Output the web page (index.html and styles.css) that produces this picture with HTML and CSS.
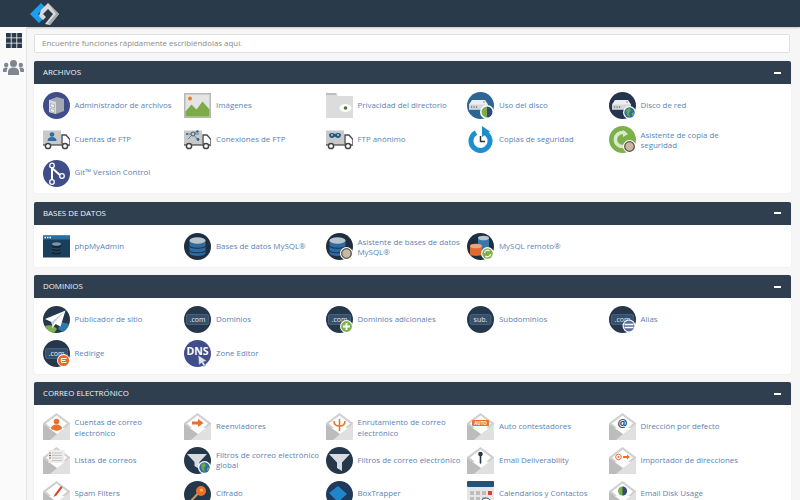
FILE: index.html
```html
<!DOCTYPE html>
<html lang="es">
<head>
  <meta charset="UTF-8">
  <meta name="viewport" content="width=device-width, initial-scale=1.0">
  <title>cPanel - Herramientas</title>
  <link rel="stylesheet" href="styles.css">
</head>
<body>
  <!-- shared icon symbols -->
  <svg class="sprites" xmlns="http://www.w3.org/2000/svg">
    <symbol id="truck" viewBox="0 0 27 27">
      <rect x="0" y="4.500" width="18" height="14" fill="#c9c9c9"/>
      <path d="M19 9h4l4 4.500v5.500h-8z" fill="#fff" stroke="#4a4a4a" stroke-width="1.400"/>
      <rect x="0" y="18" width="27" height="1.800" fill="#777"/>
      <circle cx="5" cy="20" r="2.600" fill="#fff" stroke="#444" stroke-width="1.500"/>
      <circle cx="22" cy="20" r="2.600" fill="#fff" stroke="#444" stroke-width="1.500"/>
    </symbol>
    <symbol id="env" viewBox="0 0 27 27">
      <path d="M13.500 0 27 10v5H0v-5z" fill="#d0d0d0"/>
      <path d="M13.500 2.500 24 10.500 13.500 20 3 10.500z" fill="#fff"/>
      <path d="M0 11 14 21 27 27H0z" fill="#bcbcbc"/>
      <path d="M27 11v16H7l7-6z" fill="#e0e0e0"/>
    </symbol>
    <symbol id="server" viewBox="0 0 27 27">
      <path d="M4 12.500 7 8h13l3 4.500v5H4z" fill="#eceff2"/>
      <rect x="4" y="12.500" width="19" height="5" fill="#d3d7db"/>
      <path d="M6 15h1.200M8.500 15h1.200M11 15h1.200" stroke="#444" stroke-width="1.200"/>
      <circle cx="19" cy="10" r=".8" fill="#d9663c"/>
    </symbol>
    <symbol id="db" viewBox="0 0 27 27">
      <path d="M5.500 8v12c0 4 16 4 16 0V8z" fill="#2d6ba3"/>
      <path d="M5.500 13c0 3 16 3 16 0M5.500 17.500c0 3 16 3 16 0" fill="none" stroke="#1d2f44" stroke-width="1"/>
      <ellipse cx="13.500" cy="7.500" rx="8" ry="3.300" fill="#b9c3cc"/>
    </symbol>
    <symbol id="com" viewBox="0 0 27 27">
      <circle cx="13.500" cy="13.500" r="13.500" fill="#25374b"/>
      <rect x="2.500" y="8.500" width="22" height="10" rx="1.500" fill="#35506c" stroke="#5c7690" stroke-width=".6"/>
      <text x="13.500" y="16" text-anchor="middle" class="svg-text">.com</text>
    </symbol>
    <symbol id="globe" viewBox="0 0 27 27">
      <circle cx="20.500" cy="20.500" r="6.500" fill="#fff"/>
      <circle cx="20.500" cy="20.500" r="5.200" fill="#2f6f9e"/>
      <path d="M17 18l3-2 2 2-2 3 1 4-3-2zM23 21l2-1v3l-2 1z" fill="#6ea84a"/>
    </symbol>
    <symbol id="magnifier" viewBox="0 0 27 27">
      <circle cx="20.500" cy="20.500" r="6.500" fill="#fff"/>
      <circle cx="20.500" cy="20.500" r="4.800" fill="#c8b9a0" stroke="#5a5348" stroke-width="1.300"/>
    </symbol>
  </svg>

  <header class="topbar">
    <svg class="logo" width="31" height="24" viewBox="0 0 31 24">
      <path d="M12 1 1 12l9 9 4-4-5-5 7-7z" fill="#1b9df0"/>
      <path d="M12 8 19 1l11 11-9 11-5-1 8-10-5-5-5 5 3 3-3 3-4-4z" fill="#d9d9d9"/>
      <path d="M19 1l11 11-9 11-2-2 8-9z" fill="#a9a9a9"/>
    </svg>
  </header>

  <div class="layout">
    <nav class="sidebar">
      <svg class="side-icon" width="16" height="15" viewBox="0 0 16 15">
        <path d="M0 0h4.800v4.500H0zM5.600 0h4.800v4.500H5.600zM11.200 0H16v4.500h-4.800zM0 5.300h4.800v4.400H0zM5.600 5.300h4.800v4.400H5.600zM11.200 5.300H16v4.400h-4.800zM0 10.500h4.800V15H0zM5.600 10.500h4.800V15H5.600zM11.200 10.500H16V15h-4.800z" fill="#293a4a"/>
      </svg>
      <svg class="side-icon" width="21" height="15" viewBox="0 0 21 15">
        <circle cx="10.500" cy="3.500" r="3.500" fill="#7d8791"/>
        <circle cx="3.200" cy="5" r="2.200" fill="#7d8791"/>
        <circle cx="17.800" cy="5" r="2.200" fill="#7d8791"/>
        <path d="M5 15v-3c0-3 2-4.500 5.500-4.500S16 9 16 12v3zM0 12V10c0-1.500 1-2.500 3-2.500 .7 0 1.300.1 1.800.4C4 9 3.700 10 3.700 12zM21 12V10c0-1.500-1-2.500-3-2.500-.7 0-1.300.1-1.800.4.800 1.100 1.100 2.100 1.100 4.100z" fill="#7d8791"/>
      </svg>
    </nav>

    <main class="content">
      <div class="search">Encuentre funciones rápidamente escribiéndolas aquí.</div>

      <section class="panel">
        <div class="panel-head"><h2>ARCHIVOS</h2><span class="collapse"></span></div>
        <div class="panel-body">
          <a class="item"><svg class="icon" viewBox="0 0 27 27"><circle cx="13.500" cy="13.500" r="13.500" fill="#3f4d8a"/><path d="M6 8l8-3 7 2v12l-8 3-7-2z" fill="#a4a8b0"/><path d="M6 8l7 2v12l-7-2z" fill="#d8dade"/><path d="M7.500 11.500l4 1.200v3l-4-1.200zM7.500 16.500l4 1.200v3l-4-1.200z" fill="#eef0f2" stroke="#888" stroke-width=".5"/></svg><span class="label">Administrador de archivos</span></a>
          <a class="item"><svg class="icon" viewBox="0 0 27 27"><rect y="1" width="27" height="25" fill="#b8b8b8"/><rect x="1.500" y="2.500" width="24" height="22" fill="#e4e4e4"/><circle cx="6" cy="6.500" r="2" fill="#ef7b22"/><path d="M1.500 24.500v-5l6-7 5 5 6-8 7 8v7z" fill="#7dab45"/></svg><span class="label">Imágenes</span></a>
          <a class="item"><svg class="icon" viewBox="0 0 27 27"><path d="M0 1h10l2 3h15v22H0z" fill="#dcdcdc"/><path d="M0 1h10l1 2H0z" fill="#bdbdbd"/><ellipse cx="19.500" cy="16" rx="6" ry="4" fill="#fff"/><circle cx="19.500" cy="16" r="1.800" fill="#3f7a34"/></svg><span class="label">Privacidad del directorio</span></a>
          <a class="item"><svg class="icon" viewBox="0 0 27 27"><circle cx="13.500" cy="13.500" r="13.500" fill="#2d6593"/><use href="#server" x="-2" width="27" height="27"/><circle cx="20" cy="20" r="7" fill="#fff"/><path d="M20 20v-5.500a5.500 5.500 0 0 1 0 11z" fill="#33497e"/><path d="M20 20v5.500a5.500 5.500 0 0 1 0-11z" fill="#7aae4a"/></svg><span class="label">Uso del disco</span></a>
          <a class="item"><svg class="icon" viewBox="0 0 27 27"><circle cx="13.500" cy="13.500" r="13.500" fill="#24344f"/><use href="#server" x="-1" width="27" height="27"/><use href="#globe" width="27" height="27"/></svg><span class="label">Disco de red</span></a>
          <a class="item"><svg class="icon" viewBox="0 0 27 27"><use href="#truck" width="27" height="27"/><circle cx="9" cy="8.500" r="2.300" fill="#2a6fa6"/><path d="M4.500 15c0-3 2-4 4.500-4s4.500 1 4.500 4z" fill="#2a6fa6"/></svg><span class="label">Cuentas de FTP</span></a>
          <a class="item"><svg class="icon" viewBox="0 0 27 27"><use href="#truck" width="27" height="27"/><path d="M3 8h12M9 8l4-3M9 8l5 6M9 8l-5 5" stroke="#35607f" stroke-width=".7"/><circle cx="9" cy="8" r="2" fill="#c9c9c9" stroke="#35607f"/><circle cx="3" cy="8" r="1" fill="#35607f"/><circle cx="13.500" cy="5.500" r="1.200" fill="#35607f"/><circle cx="14" cy="13.500" r="1.400" fill="#35607f"/></svg><span class="label">Conexiones de FTP</span></a>
          <a class="item"><svg class="icon" viewBox="0 0 27 27"><use href="#truck" width="27" height="27"/><path d="M3 8c2-1.500 4-1.500 6 0 2-1.500 4-1.500 6 0 0 3-1.500 4-3 4-1.500 0-2-1-3-1.500C8 11 7.500 12 6 12c-1.500 0-3-1-3-4z" fill="#1d5b86"/><circle cx="6" cy="9" r="1" fill="#c9c9c9"/><circle cx="12" cy="9" r="1" fill="#c9c9c9"/></svg><span class="label">FTP anónimo</span></a>
          <a class="item"><svg class="icon" viewBox="0 0 27 27"><path d="M16 5.800A9.500 9.500 0 1 1 9 6.600" fill="none" stroke="#1d8fcf" stroke-width="5"/><path d="M15 0l8 5.500-8 5.500z" fill="#1d8fcf"/><path d="M13.500 10v5.500H18" fill="none" stroke="#333" stroke-width="1.500"/></svg><span class="label">Copias de seguridad</span></a>
          <a class="item"><svg class="icon" viewBox="0 0 27 27"><circle cx="13.500" cy="13.500" r="13.500" fill="#7cb04a"/><path d="M16 7a7 7 0 1 0 0 13" fill="none" stroke="#dbe8cd" stroke-width="3.500"/><path d="M14 4l5 4-5 3z" fill="#dbe8cd"/><use href="#magnifier" width="27" height="27"/></svg><span class="label two">Asistente de copia de seguridad</span></a>
          <a class="item"><svg class="icon" viewBox="0 0 27 27"><circle cx="13.500" cy="13.500" r="13.500" fill="#3f4d8a"/><path d="M9 7v14M9 8l9 8" fill="none" stroke="#fff" stroke-width="2"/><circle cx="9" cy="5.500" r="2.300" fill="#3f4d8a" stroke="#fff" stroke-width="1.300"/><circle cx="9" cy="22" r="2.300" fill="#3f4d8a" stroke="#fff" stroke-width="1.300"/><circle cx="19" cy="16" r="2.300" fill="#3f4d8a" stroke="#fff" stroke-width="1.300"/></svg><span class="label">Git™ Version Control</span></a>
        </div>
      </section>

      <section class="panel">
        <div class="panel-head"><h2>BASES DE DATOS</h2><span class="collapse"></span></div>
        <div class="panel-body">
          <a class="item"><svg class="icon" viewBox="0 0 27 27"><rect y="2.500" width="27" height="22" fill="#1a3f5c"/><rect y="2.500" width="27" height="4" fill="#2b6f9f"/><path d="M1.500 4.500h1.500M4 4.500h1.500M6.500 4.500H8" stroke="#fff" stroke-width="1.300"/><path d="M9 11v9c0 2 9 2 9 0v-9z" fill="#10273a"/><ellipse cx="13.500" cy="11" rx="4.500" ry="1.800" fill="#7d95a8"/><path d="M9 14.500c0 2 9 2 9 0M9 17.500c0 2 9 2 9 0" fill="none" stroke="#557186" stroke-width=".6"/></svg><span class="label">phpMyAdmin</span></a>
          <a class="item"><svg class="icon" viewBox="0 0 27 27"><circle cx="13.500" cy="13.500" r="13.500" fill="#1f2f42"/><use href="#db" width="27" height="27"/></svg><span class="label">Bases de datos MySQL®</span></a>
          <a class="item"><svg class="icon" viewBox="0 0 27 27"><circle cx="13.500" cy="13.500" r="13.500" fill="#1f2f42"/><use href="#db" x="-2" width="27" height="27"/><use href="#magnifier" width="27" height="27"/></svg><span class="label two">Asistente de bases de datos MySQL®</span></a>
          <a class="item"><svg class="icon" viewBox="0 0 27 27"><circle cx="13.500" cy="13.500" r="13.500" fill="#1f2f42"/><path d="M11 5v9c0 2.500 11 2.500 11 0V5z" fill="#3a77ad"/><ellipse cx="16.500" cy="5" rx="5.500" ry="2.300" fill="#b9c3cc"/><path d="M3 13v8c0 2.500 12 2.500 12 0v-8z" fill="#e0692f"/><ellipse cx="9" cy="13" rx="6" ry="2.300" fill="#f0a27c"/><circle cx="20.500" cy="20.500" r="6.500" fill="#fff"/><circle cx="20.500" cy="20.500" r="5.200" fill="#7cb04a"/><path d="M17.500 20a3 3 0 0 1 5-2M23.500 21a3 3 0 0 1-5 2" fill="none" stroke="#fff" stroke-width="1.200"/></svg><span class="label">MySQL remoto®</span></a>
        </div>
      </section>

      <section class="panel">
        <div class="panel-head"><h2>DOMINIOS</h2><span class="collapse"></span></div>
        <div class="panel-body">
          <a class="item"><svg class="icon" viewBox="0 0 27 27"><circle cx="13.500" cy="13.500" r="13.500" fill="#25374b"/><path d="M2 20c5-2 9 0 12 3l-3 4c-4-.5-7-3-9-7z" fill="#7cb04a"/><path d="M18 16l8 2c-1 4-3 6.500-6 8l-5-3z" fill="#2d7aa8"/><path d="M22.500 4.500 2 13l6.500 3 1 6 3-4 5 2.500z" fill="#fff"/><path d="M22.500 4.500 8.500 16l1 6 1.500-5z" fill="#c9d2da"/></svg><span class="label">Publicador de sitio</span></a>
          <a class="item"><svg class="icon" viewBox="0 0 27 27"><use href="#com" width="27" height="27"/></svg><span class="label">Dominios</span></a>
          <a class="item"><svg class="icon" viewBox="0 0 27 27"><use href="#com" width="27" height="27"/><circle cx="20.500" cy="20.500" r="6.500" fill="#fff"/><circle cx="20.500" cy="20.500" r="5.400" fill="#7cb04a"/><path d="M20.500 17v7M17 20.500h7" stroke="#fff" stroke-width="1.800"/></svg><span class="label">Dominios adicionales</span></a>
          <a class="item"><svg class="icon" viewBox="0 0 27 27"><circle cx="13.500" cy="13.500" r="13.500" fill="#25374b"/><rect x="3" y="8.500" width="21" height="10" rx="2" fill="#35506c" stroke="#5c7690" stroke-width=".6"/><text x="13.500" y="16" text-anchor="middle" class="svg-text">sub.</text></svg><span class="label">Subdominios</span></a>
          <a class="item"><svg class="icon" viewBox="0 0 27 27"><use href="#com" width="27" height="27"/><circle cx="20" cy="20" r="6.500" fill="#fff"/><circle cx="20" cy="20" r="5.400" fill="#5a6f9e"/><path d="M15.500 18.500h9M15.500 21.500h9" stroke="#fff" stroke-width="1.300"/></svg><span class="label">Alias</span></a>
          <a class="item"><svg class="icon" viewBox="0 0 27 27"><use href="#com" width="27" height="27"/><circle cx="20.500" cy="20.500" r="6.500" fill="#fff"/><circle cx="20.500" cy="20.500" r="5.600" fill="#e8672a"/><path d="M23.500 18.500h-5v4h5M18.500 20.500h4" fill="none" stroke="#fff" stroke-width="1.200"/></svg><span class="label">Redirige</span></a>
          <a class="item"><svg class="icon" viewBox="0 0 27 27"><circle cx="13.500" cy="13.500" r="13.500" fill="#3f4d8a"/><text x="13.500" y="14.500" text-anchor="middle" class="svg-dns">DNS</text><path d="M14 15l9 6-3.500 .8 2 3.500-2 1-2-3.500-2.500 2.500z" fill="#dfe3ea" stroke="#3f4d8a" stroke-width=".5"/></svg><span class="label">Zone Editor</span></a>
        </div>
      </section>

      <section class="panel">
        <div class="panel-head"><h2>CORREO ELECTRÓNICO</h2><span class="collapse"></span></div>
        <div class="panel-body">
          <a class="item"><svg class="icon" viewBox="0 0 27 27"><use href="#env" width="27" height="27"/><circle cx="13.500" cy="8.500" r="2.800" fill="#ec6f2d"/><path d="M8 16c0-3 2.500-4.500 5.500-4.500S19 13 19 16l-5.500 2z" fill="#ec6f2d"/></svg><span class="label two">Cuentas de correo electrónico</span></a>
          <a class="item"><svg class="icon" viewBox="0 0 27 27"><use href="#env" width="27" height="27"/><path d="M8 8.500h6V6l5.500 4-5.500 4v-2.500H8z" fill="#ec6f2d"/></svg><span class="label">Reenviadores</span></a>
          <a class="item"><svg class="icon" viewBox="0 0 27 27"><use href="#env" width="27" height="27"/><path d="M13.500 18V6M8 8c0 3 2 5 5.500 5S19 11 19 8" fill="none" stroke="#ec6f2d" stroke-width="1.500"/></svg><span class="label two">Enrutamiento de correo electrónico</span></a>
          <a class="item"><svg class="icon" viewBox="0 0 27 27"><use href="#env" width="27" height="27"/><rect x="5" y="7" width="17" height="6" rx="1" fill="#ec6f2d"/><text x="13.500" y="11.800" text-anchor="middle" class="svg-auto">AUTO</text></svg><span class="label">Auto contestadores</span></a>
          <a class="item"><svg class="icon" viewBox="0 0 27 27"><use href="#env" width="27" height="27"/><text x="13.500" y="13.500" text-anchor="middle" class="svg-at">@</text></svg><span class="label">Dirección por defecto</span></a>
          <a class="item"><svg class="icon" viewBox="0 0 27 27"><use href="#env" width="27" height="27"/><rect x="5.500" y="3" width="16" height="13" fill="#ededed"/><path d="M9 6h10M9 8.500h10M9 11h10M9 13.500h10" stroke="#c5c5c5"/><circle cx="7" cy="6" r=".8" fill="#c0532a"/><circle cx="7" cy="8.500" r=".8" fill="#444"/><circle cx="7" cy="11" r=".8" fill="#c0532a"/></svg><span class="label">Listas de correos</span></a>
          <a class="item"><svg class="icon" viewBox="0 0 27 27"><circle cx="13.500" cy="13.500" r="13.500" fill="#25374b"/><path d="M3 7h20l-7.500 8v7l-5-3v-4z" fill="#d8dce0"/><use href="#globe" width="27" height="27"/></svg><span class="label">Filtros de correo electrónico global</span></a>
          <a class="item"><svg class="icon" viewBox="0 0 27 27"><circle cx="13.500" cy="13.500" r="13.500" fill="#25374b"/><path d="M3 7h21l-8 8.500V24l-5-3v-5.500z" fill="#d8dce0"/></svg><span class="label">Filtros de correo electrónico</span></a>
          <a class="item"><svg class="icon" viewBox="0 0 27 27"><use href="#env" width="27" height="27"/><circle cx="13.500" cy="7" r="2.300" fill="#25374b"/><path d="M12.700 8h1.600v8l-.8 1-.8-1z" fill="#25374b"/></svg><span class="label">Email Deliverability</span></a>
          <a class="item"><svg class="icon" viewBox="0 0 27 27"><use href="#env" width="27" height="27"/><circle cx="9.500" cy="10" r="2.800" fill="none" stroke="#ec6f2d"/><circle cx="9.500" cy="10" r="1" fill="#ec6f2d"/><path d="M14 9h4V7.500l3 2.500-3 2.500V11h-4z" fill="#ec6f2d"/></svg><span class="label">Importador de direcciones</span></a>
          <a class="item"><svg class="icon" viewBox="0 0 27 27"><use href="#env" width="27" height="27"/><path d="M18 5l-6 8-1.500 3 3-1.500 6-8z" fill="#d9412b"/></svg><span class="label">Spam Filters</span></a>
          <a class="item"><svg class="icon" viewBox="0 0 27 27"><circle cx="13.500" cy="13.500" r="13.500" fill="#25374b"/><circle cx="17" cy="10" r="5" fill="#ec6f2d"/><circle cx="17.500" cy="9" r="1.600" fill="#f5c04a"/><path d="M13.500 13 5 22" stroke="#c8a15a" stroke-width="2"/></svg><span class="label">Cifrado</span></a>
          <a class="item"><svg class="icon" viewBox="0 0 27 27"><circle cx="13.500" cy="13.500" r="13.500" fill="#1f3a5c"/><path d="M3 12l9-7 9 8-9 8z" fill="#1f86c9"/><path d="M12 21l10 5" stroke="#d5dde5"/></svg><span class="label">BoxTrapper</span></a>
          <a class="item"><svg class="icon" viewBox="0 0 27 27"><rect y="0" width="27" height="27" fill="#e6e6e6"/><rect y="0" width="27" height="6" rx="1" fill="#24527a"/><path d="M3 10h4v4H3zM9 10h4v4H9zM15 10h4v4h-4zM3 16h4v4H3zM9 16h4v4H9zM15 16h4v4h-4z" fill="#bdbdbd"/><rect x="21" y="10" width="4" height="4" fill="#d9412b"/><circle cx="19" cy="22" r="5" fill="#fff" stroke="#24527a"/></svg><span class="label">Calendarios y Contactos</span></a>
          <a class="item"><svg class="icon" viewBox="0 0 27 27"><use href="#env" width="27" height="27"/><circle cx="13.500" cy="10" r="4.500" fill="#7aae4a"/><path d="M13.500 10V5.500a4.500 4.500 0 0 1 0 9z" fill="#33497e"/></svg><span class="label">Email Disk Usage</span></a>
        </div>
      </section>
    </main>
  </div>
</body>
</html>
```

FILE: styles.css
```css
html, body {
  margin: 0;
  height: 100%;
  overflow: hidden;
}
body {
  font-family: 'Open Sans', 'Noto Sans', sans-serif;
  font-size: 7.9px;
  background: #f6f6f6;
  color: #222;
  display: flex;
  flex-direction: column;
}
.sprites {
  display: none;
}
.topbar {
  flex: none;
  height: 27px;
  background: #293a4a;
  box-shadow: 0 1px 2px rgba(0, 0, 0, 0.2);
  display: flex;
  align-items: center;
  padding-left: 29px;
}
.layout {
  flex: 1;
  display: flex;
  min-height: 0;
}
.sidebar {
  flex: none;
  width: 23.5px;
  background: #fafafa;
  border-right: 1.5px solid #e4e4e4;
  display: flex;
  flex-direction: column;
  align-items: center;
  gap: 12px;
  padding: 6px 0 0 2px;
}
.content {
  flex: 1;
  min-width: 0;
  padding: 7px 9px 0 7.5px;
}
.search {
  height: 16.5px;
  line-height: 16.5px;
  margin-right: 0.7px;
  padding-left: 7px;
  background: #fff;
  border: 1px solid #dfe2e5;
  border-radius: 2px;
  color: #8a8a8a;
  margin-bottom: 8.8px;
}
.panel {
  background: #fff;
  border-radius: 2px;
  box-shadow: 0 0 1px rgba(0, 0, 0, 0.12);
  margin-bottom: 8.7px;
}
.panel-head {
  height: 22.5px;
  background: #2f3f50;
  border-radius: 2px 2px 0 0;
  display: flex;
  align-items: center;
  justify-content: space-between;
  padding: 0 10.5px 0 9px;
}
.panel-head h2 {
  margin: 0 0 1px;
  font-size: 7.9px;
  font-weight: 400;
  color: #f2f4f6;
}
.collapse {
  width: 7px;
  height: 2px;
  background: #fff;
}
.panel-body {
  display: grid;
  grid-template-columns: repeat(5, 141.5px);
  grid-auto-rows: 27px;
  row-gap: 6.7px;
  padding: 8.5px 0 6.7px 8.5px;
}
.item {
  display: flex;
  align-items: center;
  gap: 5px;
  color: #5a84b6;
  line-height: 10.4px;
}
.icon {
  flex: none;
  width: 27px;
  height: 27px;
}
.label {
  max-width: 104px;
  padding-bottom: 1.5px;
}
.label.two {
  padding: 1.5px 0 0;
}
.svg-text {
  font-size: 7px;
  fill: #e3e9ee;
}
.svg-dns {
  font-size: 10.5px;
  font-weight: 700;
  fill: #fff;
}
.svg-auto {
  font-size: 4.5px;
  font-weight: 700;
  fill: #fff;
}
.svg-at {
  font-size: 11px;
  font-weight: 700;
  fill: #24527a;
}
```
